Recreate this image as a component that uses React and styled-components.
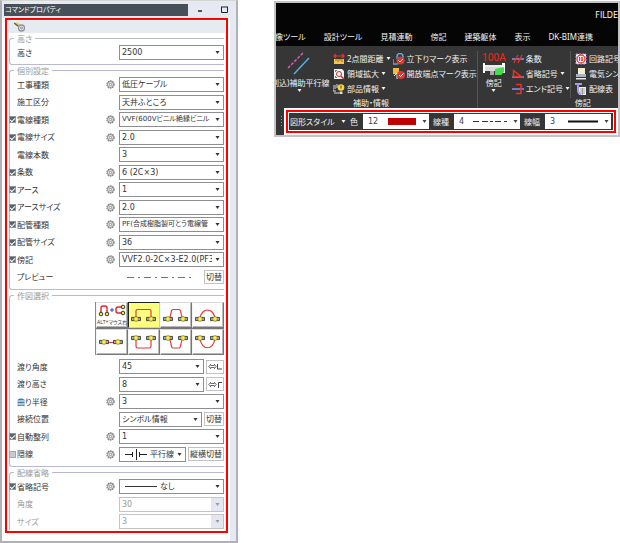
import React, { useId } from "react";
import styled, { createGlobalStyle, css } from "styled-components";

const GlobalStyles = createGlobalStyle`
  * {
    box-sizing: border-box;
  }
  body {
    margin: 0;
    background: #fff;
    color: #333;
    font-family: "Noto Sans", "Noto Sans CJK JP", sans-serif;
    font-size: 8px;
    line-height: 12px;
    font-feature-settings: "palt";
  }
  button, select, input {
    margin: 0;
    padding: 0;
    font: inherit;
    font-feature-settings: inherit;
    color: inherit;
  }
  svg {
    display: block;
    flex: none;
  }
`;

const Page = styled.main`
  display: grid;
  grid-template-columns: 238fr 346fr;
  column-gap: 36px;
  align-items: start;
`;

/* ---------- Command property window ---------- */

const PropertyWindow = styled.section`
  min-width: 0;
  padding: 0 6px 8px 2px;
  background: #fff;
  border: 2px solid #b0b0b6;
  border-top: 1px solid #d4d6d2;
  box-shadow: inset -6px 0 #e6e8f2;
`;

const TitleBar = styled.header`
  display: flex;
  align-items: center;
  height: 17px;
  margin: 0 -6px 0 -2px;
  padding-left: 2px;
  background: #e6e8f2;
`;

const Title = styled.h1`
  flex: 1;
  margin: 0;
  padding-left: 1px;
  background: #475059;
  color: #fff;
  font-size: 7px;
  font-weight: 400;
  line-height: 12px;
`;

const WindowButton = styled.button`
  display: flex;
  justify-content: center;
  width: 24px;
  border: 0;
  background: none;
`;

const Frame = styled.div`
  margin: 0 2px 0 1px;
  padding: 1px;
  border: 2px solid #f00;
  background: #fff;
`;

const ToolStrip = styled.div`
  display: flex;
  align-items: center;
  height: 12px;
  margin-bottom: 1px;
  padding-left: 6px;
  background: #e8eaf2;
`;

const IconButton = styled.button`
  display: flex;
  border: 0;
  background: none;
`;

const Group = styled.fieldset`
  min-width: 0;
  margin: 0 1px 1px;
  padding: 1px 0 3px;
  border: 1px solid #b9bad2;
  border-right: 0;
  border-radius: 3px 0 0 3px;
  ${(p) => p.$open && css`
    border-bottom: 0;
    border-radius: 3px 0 0 0;
    margin-bottom: 0;
    padding-bottom: 0;
  `}
`;

const Legend = styled.legend`
  height: 9px;
  margin-left: 4px;
  padding: 0 3px;
  color: #999;
  line-height: 9px;
`;

const RowBox = styled.div`
  display: grid;
  grid-template-columns: 7px 88fr 12px 105fr;
  column-gap: 1px;
  align-items: center;
  height: 17px;
  margin-left: -1px;
  color: ${(p) => (p.$disabled ? "#999" : "#333")};
  &:nth-child(even) {
    height: 18px;
  }
`;

const RowLabel = styled.label`
  grid-column: 2;
  white-space: nowrap;
`;

const RowField = styled.div`
  grid-column: 4;
  display: flex;
  align-items: center;
  gap: 2px;
  min-width: 0;
`;

const Check = styled.input`
  appearance: none;
  display: grid;
  place-items: center;
  width: 7px;
  height: 7px;
  background: #c8ccd2;
  border: 1px solid #a4a8b0;
  &:checked {
    background: #59636e;
    border-color: #8d959e;
  }
  &:checked::after {
    content: "";
    width: 4px;
    height: 2px;
    border: solid #fff;
    border-width: 0 0 1px 1px;
    transform: rotate(-45deg);
  }
`;

const Combo = styled.div`
  flex: 1;
  display: flex;
  align-items: center;
  min-width: 0;
  height: 15px;
  padding-left: 2px;
  background: #fff;
  border: 1px solid ${(p) => (p.$disabled ? "#c4c4c8" : "#8e8e92")};
  color: ${(p) => (p.$disabled ? "#999" : "#333")};

  select {
    appearance: none;
    flex: 1;
    min-width: 0;
    height: 13px;
    padding: 0 11px 0 0;
    border: 0;
    background: none;
    opacity: 1;
    font-family: "DejaVu Sans", "Noto Sans CJK JP", sans-serif;
    font-size: ${(p) => (p.$dense ? "7px" : "8px")};
    line-height: 13px;
  }
`;

const ComboArrow = styled.span`
  display: grid;
  place-items: center;
  width: 12px;
  height: 13px;
  margin-left: -12px;
  background: ${(p) => (p.$disabled ? "#e4e6f0" : "none")};
  pointer-events: none;
`;

const Drawing = styled.span`
  padding: 0 3px;
`;

const SmallButton = styled.button`
  display: flex;
  align-items: center;
  justify-content: center;
  height: 14px;
  padding: 0 1px;
  border: 1px solid #c2c2c6;
  background: #fff;
  white-space: nowrap;
`;

const PreviewField = styled(RowField)`
  justify-content: space-between;
  padding-left: 8px;
`;

const Picker = styled.div`
  display: grid;
  grid-template-columns: repeat(4, 32px);
  row-gap: 1px;
  width: max-content;
  margin: 1px 0 3px auto;
  border-left: 1px solid #888;
  background: #777;
`;

const ShapeButton = styled.button`
  display: flex;
  flex-direction: column;
  align-items: center;
  height: 26px;
  border: 1px solid;
  border-color: #d8d8d8 #777 #777 #f4f4f4;
  box-shadow: inset -1px -1px #b8b8b8;
  background: #fff;
  font-size: 5px;
  line-height: 8px;
  white-space: nowrap;
  ${(p) => p.$selected && css`
    border-color: #222 #ccc #ccc #222;
    box-shadow: none;
    background: #ffff80;
  `}
`;

/* ---------- Ribbon window ---------- */

const RibbonWindow = styled.section`
  min-width: 0;
  margin-top: 1px;
  overflow: hidden;
  border: 2px solid #c4c4c4;
  background: #363636;
  color: #f2f2f2;
`;

const AppTitle = styled.div`
  display: flex;
  justify-content: flex-end;
  height: 26px;
  background: #050505;
  font-family: "DejaVu Sans", sans-serif;
  line-height: 26px;
`;

const Tabs = styled.nav`
  display: flex;
  gap: 18px;
  height: 17px;
  padding-bottom: 1px;
  background: #050505;
`;

const Tab = styled.button`
  flex: none;
  border: 0;
  background: none;
  white-space: nowrap;
  &:first-child {
    margin-left: -9px;
  }
`;

const Ribbon = styled.div`
  display: flex;
  height: 62px;
  padding-top: 5px;
`;

const RibbonGroup = styled.div`
  display: flex;
  flex-direction: column;
  flex: none;
  margin-left: ${(p) => (p.$first ? "-9px" : "0")};
  border-left: ${(p) => (p.$first ? "0" : "1px solid #555")};
`;

const GroupBody = styled.div`
  display: flex;
  height: 47px;
`;

const GroupName = styled.div`
  padding-left: ${(p) => p.$indent};
  line-height: 10px;
`;

const BigButton = styled.button`
  display: flex;
  flex-direction: column;
  align-items: center;
  width: ${(p) => p.$width};
  height: 43px;
  border: 0;
  background: none;
  white-space: nowrap;
`;

const ToolColumn = styled.div`
  display: flex;
  flex-direction: column;
  padding-left: 2px;
  ${(p) => p.$divided && css`
    padding-left: 4px;
    border-left: 1px solid #555;
  `}
`;

const ToolButton = styled.button`
  display: flex;
  align-items: center;
  gap: 2px;
  height: 15px;
  border: 0;
  background: none;
  white-space: nowrap;
`;

const StyleBand = styled.div`
  display: flex;
  align-items: center;
  gap: 1px;
  padding-left: 5px;
`;

const StyleFrame = styled.div`
  flex: 1;
  min-width: 0;
  border: 2px solid #fff;
`;

const StyleBar = styled.div`
  display: flex;
  align-items: center;
  height: 23px;
  padding: 0 3px 0 2px;
  background: #363636;
  border: 2px solid #f00;
  box-shadow: inset 0 0 0 1px #fff;
`;

const StyleName = styled.button`
  display: flex;
  align-items: center;
  justify-content: space-between;
  width: 56px;
  border: 0;
  background: none;
  white-space: nowrap;
`;

const StyleLabel = styled.label`
  margin: 0 5px 0 4px;
  white-space: nowrap;
`;

const ValueCombo = styled.div`
  flex: 1;
  display: flex;
  align-items: center;
  gap: 6px;
  min-width: 0;
  height: 15px;
  padding: 0 2px 0 5px;
  background: #fff;
  color: #444;

  select {
    appearance: none;
    flex: 1;
    min-width: 0;
    border: 0;
    background: none;
    font-family: "DejaVu Sans", sans-serif;
    line-height: 15px;
  }
`;

const Swatch = styled.span`
  width: 28px;
  height: 7px;
  background: #c00000;
`;

/* ---------- Icons ---------- */

const Gear = () => (
  <svg width="9" height="9" viewBox="0 0 9 9" fill="none" stroke="#858585" aria-hidden="true">
    <circle cx="4.5" cy="4.5" r="3.6" strokeWidth="1.2" strokeDasharray="1.6 .7" />
    <circle cx="4.5" cy="4.5" r="2.9" strokeWidth="1" />
    <circle cx="4.5" cy="4.5" r="1.2" strokeWidth="1" />
  </svg>
);

const Down = () => (
  <svg width="5" height="3" viewBox="0 0 5 3" fill="currentColor" aria-hidden="true">
    <path d="M0.5 0h4L2.5 3z" />
  </svg>
);

const Grip = () => (
  <svg width="2" height="13" viewBox="0 0 2 13" fill="#999" aria-hidden="true">
    <path d="M0 1h1v1H0zM0 4h1v1H0zM0 7h1v1H0zM0 10h1v1H0z" />
  </svg>
);

const Fitting = ({ x, y }) => (
  <g stroke="#222" strokeWidth=".8">
    <path d={`M${x - 4.5} ${y - 1.6}h9v3.2h-9z`} fill="#fff" />
    <path d={`M${x - 3} ${y - 1.6}v3.2M${x + 3} ${y - 1.6}v3.2`} />
    <circle cx={x} cy={y} r="2.3" fill="#f9f250" stroke="#8a8328" />
  </g>
);

const WireIcon = ({ d, y = 16, left = 7, right = 22 }) => (
  <svg width="30" height="24" viewBox="0 0 30 24" fill="none" aria-hidden="true">
    <path d={d} stroke="#e8363c" strokeWidth="1.2" />
    <Fitting x={left} y={y} />
    <Fitting x={right} y={y} />
  </svg>
);

const AltIcon = () => (
  <svg width="30" height="15" viewBox="0 0 30 15" fill="none" aria-hidden="true">
    <path d="M4 10V5q0-2 2-2h2q2 0 2 2v5M26 4h-5q-2 0-2 2v2q0 2 2 2h5" stroke="#e2262e" strokeWidth="1.4" />
    <path d="M13 7h4M15 5v4" stroke="#2440e0" />
    <g fill="#f7ef3c" stroke="#222" strokeWidth=".9">
      <circle cx="4" cy="11" r="1.8" />
      <circle cx="10" cy="11" r="1.8" />
      <circle cx="26" cy="4" r="1.8" />
      <circle cx="26" cy="10" r="1.8" />
    </g>
  </svg>
);

const Line = ({ width, stroke = "#333", dash, weight = 1 }) => (
  <svg width={width} height="3" viewBox={`0 0 ${width} 3`} aria-hidden="true">
    <path d={`M0 1.5h${width}`} stroke={stroke} strokeWidth={weight} strokeDasharray={dash} />
  </svg>
);

const HiddenLineIcon = () => (
  <svg width="22" height="11" viewBox="0 0 22 11" fill="none" stroke="#222" aria-hidden="true">
    <path d="M0 5.500h7M7.500 3v5M11.500 0v11M14.500 3v5M15 5.500h7" />
  </svg>
);

const SwapIcon = ({ corner }) => (
  <svg width="14" height="9" viewBox="0 0 14 9" fill="none" stroke="#444" aria-hidden="true">
    <path d="M2.500 3.500h4M2.500 5.500h4M3 2L.8 4.500 3 7M6 2l2.200 2.500L6 7" strokeWidth=".8" />
    <path d={corner} />
  </svg>
);

const ParallelIcon = () => (
  <svg width="26" height="26" viewBox="0 0 26 26" fill="none" aria-hidden="true">
    <path d="M2 17L17 2" stroke="#d45fb4" strokeWidth="1.5" strokeDasharray="3 1.500" />
    <path d="M8 23L23 7" stroke="#58aee6" strokeWidth="1.5" />
  </svg>
);

const NoteIcon = () => (
  <svg width="24" height="26" viewBox="0 0 24 26" aria-hidden="true">
    <text x="0" y="10" fill="#f0281c" fontSize="10">100A</text>
    <path d="M3 14h17v6H3z" fill="#dcdcdc" />
    <path d="M3 15h17" stroke="#fff" />
    <path d="M1 12h2v10H1zM20 12h3v10h-3z" fill="#fff" />
    <path d="M8 20h4v4H8z" fill="#aaa" />
    <path d="M13 18l9-2v5l-3 3h-6z" fill="#3fe04c" />
  </svg>
);

const toolShapes = {
  ruler: <><path d="M1 6h10v5H1z" fill="#f6c544" /><path d="M3 6v2M5 6v3M7 6v2M9 6v3" stroke="#70500c" strokeWidth=".7" /><path d="M1 3h10M3 1L1 3l2 2M9 1l2 2-2 2" stroke="#ef3328" strokeWidth="1.200" fill="none" /></>,
  zoom: <><path d="M1 1h8l2 2v8H1z" fill="#f2f2f2" /><circle cx="6" cy="6" r="2.500" fill="none" stroke="#c4372c" /><path d="M8 8l3 3" stroke="#c4372c" strokeWidth="1.500" /><path d="M2.500 4V2.500H4M2.500 8v1.500H4" stroke="#555" fill="none" strokeWidth=".8" /></>,
  parts: <><path d="M0 2v6h3M2 2v4M1 10h5M4 1v4" stroke="#ddd" fill="none" /><circle cx="8" cy="4.500" r="3.300" fill="#f4d83c" /><path d="M8 2.500v3" stroke="#54470a" /><path d="M6.500 8.500h3v2.500h-3z" fill="#ddd" /></>,
  drop: <><path d="M4 6V3.500a3 3 0 016 0V6M0 6v5h5" stroke="#64a8dc" strokeWidth="1.500" fill="none" /><circle cx="7.500" cy="7.500" r="4" fill="#dc3a30" /><path d="M5.500 7.500l1.500 1.500 3-3" stroke="#fff" fill="none" /></>,
  open: <><path d="M0 0h6v6H0z" fill="#f5b83c" /><path d="M1 8l3-3v6" stroke="#eee" fill="none" /><circle cx="8" cy="7" r="4" fill="#dc3a30" /><path d="M6 7l1.500 1.500 3-3" stroke="#fff" fill="none" /></>,
  strands: <><path d="M0 6h12" stroke="#8c8cf0" strokeWidth="1.500" /><path d="M2 10l4-8M6 10l4-8" stroke="#f03020" strokeWidth="1.300" /></>,
  omit: <><path d="M0 9h12" stroke="#8c8cf0" strokeWidth="1.500" /><path d="M1.500 2.500L9 8.500H1.500z" stroke="#f03020" strokeWidth="1.500" fill="none" /></>,
  end: <><path d="M0 6h12" stroke="#8c8cf0" strokeWidth="1.500" /><path d="M4 1.500h5v9H4" stroke="#f03020" strokeWidth="1.500" fill="none" /></>,
  circuit: <><path d="M1 1h10v10H1z" stroke="#9c8ce8" strokeDasharray="2 1" fill="#fff" /><circle cx="6" cy="6" r="4" fill="#fff" stroke="#ec3428" strokeWidth="1.300" /><path d="M4.500 4v4M6.200 4.500h1.500v3H6.200z" stroke="#ec3428" fill="none" /></>,
  symbol: <><path d="M3 0h7v6H3z" fill="#f0edd0" /><path d="M1 6h10v3H1z" fill="#aab4c0" /><path d="M1 10h10v1.500H1z" fill="#e6e6e6" /></>,
  table: <><path d="M4 4h7v8H4z" fill="#eee" /><path d="M5 6h5M5 8h5M5 10h5M7.500 5v7" stroke="#777" strokeWidth=".6" /><path d="M0 1h7M2 1q1 0 1 3v3q0 4 3 4" stroke="#a898f0" strokeWidth="2" fill="none" /></>,
};

const ToolIcon = ({ name }) => (
  <svg width="12" height="12" viewBox="0 0 12 12" aria-hidden="true">
    {toolShapes[name]}
  </svg>
);

/* ---------- Parts ---------- */

const Select = ({ id, value, dense, disabled, drawing }) => (
  <Combo $dense={dense} $disabled={disabled}>
    {drawing && <Drawing>{drawing}</Drawing>}
    <select id={id} defaultValue={value} disabled={disabled}>
      <option>{value}</option>
    </select>
    <ComboArrow $disabled={disabled}><Down /></ComboArrow>
  </Combo>
);

const Row = ({ label, value, check, gear, dense, disabled, drawing, action }) => {
  const id = useId();
  return (
    <RowBox $disabled={disabled}>
      {check !== undefined && (
        <Check type="checkbox" defaultChecked={check} aria-labelledby={`${id}-label`} />
      )}
      <RowLabel id={`${id}-label`} htmlFor={id}>{label}</RowLabel>
      {gear && <Gear />}
      <RowField>
        <Select id={id} value={value} dense={dense} disabled={disabled} drawing={drawing} />
        {action && <SmallButton type="button" aria-label={`${label} 切替`}>{action}</SmallButton>}
      </RowField>
    </RowBox>
  );
};

const Tool = ({ icon, children, menu }) => (
  <ToolButton type="button">
    <ToolIcon name={icon} />
    {children}
    {menu && <Down />}
  </ToolButton>
);

const settings = [
  { label: "工事種類", value: "低圧ケーブル", gear: true },
  { label: "施工区分", value: "天井ふところ" },
  { label: "電線種類", value: "VVF(600Vビニル絶縁ビニル", gear: true, check: true, dense: true },
  { label: "電線サイズ", value: "2.0", gear: true, check: true },
  { label: "電線本数", value: "3" },
  { label: "条数", value: "6 (2C×3)", gear: true, check: true },
  { label: "アース", value: "1", gear: true, check: true },
  { label: "アースサイズ", value: "2.0", gear: true, check: true },
  { label: "配管種類", value: "PF(合成樹脂製可とう電線管", gear: true, check: true, dense: true },
  { label: "配管サイズ", value: "36", gear: true, check: true },
  { label: "傍記", value: "VVF2.0-2C×3-E2.0(PF36)", gear: true, check: true },
];

const shapes = [
  { name: "角形 上", d: "M7 16V8q0-1.500 1.500-1.500h12q1.500 0 1.500 1.500v8", selected: true },
  { name: "台形 上", d: "M7 16q2 0 3-6 .5-3.500 2-3.500h6q1.500 0 2 3.500 1 6 3 6" },
  { name: "円弧 上", d: "M7 16C8 4 21 4 22 16" },
  { name: "直線", d: "M8 12.500h13", y: 12, left: 7, right: 21 },
  { name: "角形 下", d: "M7 8v8q0 2 1.500 2h12q1.500 0 1.500-2V8", y: 8 },
  { name: "台形 下", d: "M7 8q2 0 3 6 .5 4 2 4h6q1.500 0 2-4 1-6 3-6", y: 8 },
  { name: "円弧 下", d: "M7 8C8 21 21 21 22 8", y: 8 },
];

const CommandProperties = () => (
  <PropertyWindow>
    <TitleBar>
      <Title>コマンドプロパティ</Title>
      <WindowButton type="button" aria-label="最小化">
        <svg width="7" height="7" viewBox="0 0 7 7"><path d="M1 5h4" stroke="#222" strokeWidth="1.500" /></svg>
      </WindowButton>
      <WindowButton type="button" aria-label="最大化">
        <svg width="7" height="7" viewBox="0 0 7 7" fill="none" stroke="#222"><path d="M.5 1v5.500h6V1M0 1h7" /></svg>
      </WindowButton>
    </TitleBar>
    <Frame>
      <ToolStrip>
        <IconButton type="button" aria-label="設定">
          <svg width="12" height="10" viewBox="0 0 12 10" fill="none">
            <path d="M0 1l4-.5L7 4 5 6z" fill="#e2d840" />
            <path d="M0 1l4 3" stroke="#4c5a50" strokeWidth="1.300" />
            <circle cx="7.500" cy="6" r="3" stroke="#8c9298" strokeWidth="1.300" fill="#eee" />
            <circle cx="7.500" cy="6" r="1" stroke="#8c9298" />
          </svg>
        </IconButton>
      </ToolStrip>
      <Group>
        <Legend>高さ</Legend>
        <div>
          <Row label="高さ" value="2500" />
        </div>
      </Group>
      <Group>
        <Legend>個別設定</Legend>
        <div>
          {settings.map((s) => <Row key={s.label} {...s} />)}
          <RowBox>
            <RowLabel as="span">プレビュー</RowLabel>
            <PreviewField>
              <Line width={65} stroke="#b8544c" dash="7 4 2 4" />
              <SmallButton type="button">切替</SmallButton>
            </PreviewField>
          </RowBox>
        </div>
      </Group>
      <Group>
        <Legend>作図選択</Legend>
        <Picker>
          <ShapeButton type="button">
            <AltIcon />
            ALT+マウス右
          </ShapeButton>
          {shapes.map(({ name, selected, ...shape }) => (
            <ShapeButton key={name} type="button" aria-label={name} aria-pressed={!!selected} $selected={selected}>
              <WireIcon {...shape} />
            </ShapeButton>
          ))}
        </Picker>
        <div>
          <Row label="渡り角度" value="45" action={<SwapIcon corner="M9.500 2v5H14" />} />
          <Row label="渡り高さ" value="8" action={<SwapIcon corner="M10.500 8V2.500H14" />} />
          <Row label="曲り半径" value="3" gear />
          <Row label="接続位置" value="シンボル情報" action="切替" />
          <Row label="自動整列" value="1" gear check />
          <Row label="隠線" value="平行線" gear check={false} drawing={<HiddenLineIcon />} action="縦横切替" />
        </div>
      </Group>
      <Group $open>
        <Legend>配線省略</Legend>
        <div>
          <Row label="省略記号" value="なし" gear check drawing={<Line width={32} />} />
          <Row label="角度" value="30" disabled />
          <Row label="サイズ" value="3" disabled />
        </div>
      </Group>
    </Frame>
  </PropertyWindow>
);

const StyleSelect = ({ label, value, drawing }) => {
  const id = useId();
  return (
    <>
      <StyleLabel htmlFor={id}>{label}</StyleLabel>
      <ValueCombo>
        <select id={id} defaultValue={value}>
          <option>{value}</option>
        </select>
        {drawing}
        <Down />
      </ValueCombo>
    </>
  );
};

const RibbonPanel = () => (
  <RibbonWindow>
    <AppTitle>FILDE</AppTitle>
    <Tabs>
      {["画像ツール", "設計ツール", "見積連動", "傍記", "建築躯体", "表示", "DK-BIM連携"].map((name) => (
        <Tab key={name} type="button">{name}</Tab>
      ))}
    </Tabs>
    <Ribbon>
      <RibbonGroup $first>
        <GroupBody>
          <BigButton type="button" $width="64px">
            <ParallelIcon />
            (割込)補助平行線
            <Down />
          </BigButton>
          <ToolColumn>
            <Tool icon="ruler" menu>2点間距離</Tool>
            <Tool icon="zoom" menu>領域拡大</Tool>
            <Tool icon="parts" menu>部品情報</Tool>
          </ToolColumn>
          <ToolColumn>
            <Tool icon="drop">立下りマーク表示</Tool>
            <Tool icon="open">開放端点マーク表示</Tool>
          </ToolColumn>
        </GroupBody>
        <GroupName $indent="86px">補助・情報</GroupName>
      </RibbonGroup>
      <RibbonGroup>
        <GroupBody>
          <BigButton type="button" $width="32px">
            <NoteIcon />
            傍記
            <Down />
          </BigButton>
          <ToolColumn>
            <Tool icon="strands">条数</Tool>
            <Tool icon="omit" menu>省略記号</Tool>
            <Tool icon="end" menu>エンド記号</Tool>
          </ToolColumn>
          <ToolColumn $divided>
            <Tool icon="circuit">回路記号</Tool>
            <Tool icon="symbol">電気シンボル</Tool>
            <Tool icon="table">配線表</Tool>
          </ToolColumn>
        </GroupBody>
        <GroupName $indent="97px">傍記</GroupName>
      </RibbonGroup>
    </Ribbon>
    <StyleBand>
      <Grip />
      <StyleFrame>
        <StyleBar>
          <StyleName type="button">図形スタイル<Down /></StyleName>
          <StyleSelect label="色" value="12" drawing={<Swatch />} />
          <StyleSelect label="線種" value="4" drawing={<Line width={34} dash="6 3 6 2 3 2" />} />
          <StyleSelect label="線幅" value="3" drawing={<Line width={30} weight={2} stroke="#111" />} />
        </StyleBar>
      </StyleFrame>
    </StyleBand>
  </RibbonWindow>
);

const App = () => {
  return (
    <Page>
      <GlobalStyles />
      <CommandProperties />
      <RibbonPanel />
    </Page>
  );
};

export default App;
